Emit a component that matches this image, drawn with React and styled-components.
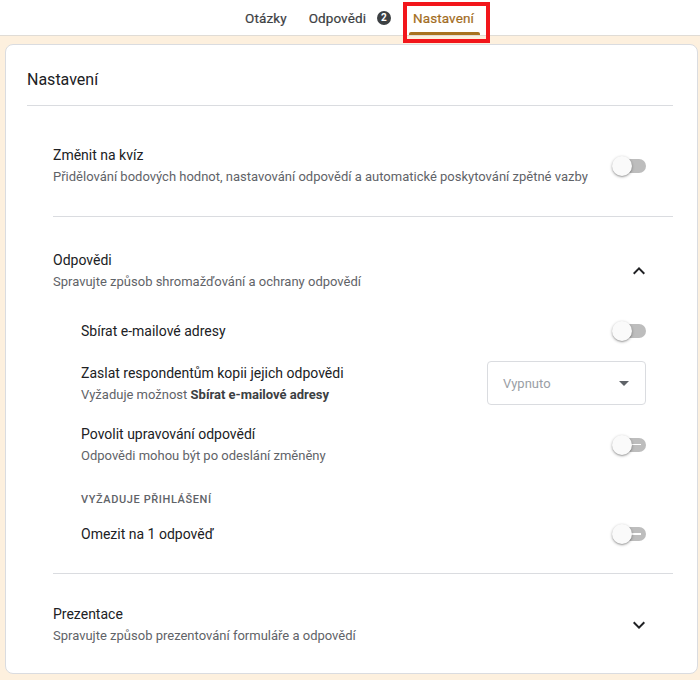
import React from "react";
import styled, { createGlobalStyle, css } from "styled-components";

const Global = createGlobalStyle`
  html, body { margin: 0; padding: 0; }
  body {
    background: #fdf0de;
    font-family: Roboto, "Noto Sans", Arial, sans-serif;
    color: #202124;
    width: 700px;
    height: 680px;
    overflow: hidden;
  }
`;

const TopBar = styled.div`
  height: 35px;
  background: #fff;
  border-bottom: 1px solid #e0dcd6;
  display: flex;
  justify-content: center;
  align-items: stretch;
  gap: 14px;
  padding-left: 19px;
`;

const Tab = styled.div`
  position: relative;
  display: flex;
  align-items: center;
  gap: 11px;
  padding: 0 4px;
  font-size: 13.5px;
  font-weight: 400;
  letter-spacing: 0.1px;
  -webkit-text-stroke: 0.2px currentColor;
  color: ${(p) => (p.$active ? "#a26c1d" : "#3c4043")};
  ${(p) =>
    p.$active &&
    css`
      &::after {
        content: "";
        position: absolute;
        left: 0;
        right: -2px;
        bottom: 0;
        height: 3px;
        background: #a8721f;
        border-radius: 2px 2px 0 0;
      }
    `}
`;

const Badge = styled.span`
  width: 14px;
  height: 14px;
  border-radius: 50%;
  background: #3c4043;
  color: #fff;
  font-size: 10px;
  font-weight: 700;
  -webkit-text-stroke: 0;
  display: inline-flex;
  align-items: center;
  justify-content: center;
`;

const Highlight = styled.div`
  position: absolute;
  top: 2px;
  left: -6px;
  right: -12px;
  bottom: -8px;
  border: 4px solid #f2161b;
  pointer-events: none;
`;

const Card = styled.div`
  margin: 8px 2px 0 5px;
  height: 630px;
  box-sizing: border-box;
  background: #fff;
  border: 1px solid #dadce0;
  border-radius: 8px;
  padding: 0 24px 0 21px;
`;

const CardTitle = styled.div`
  font-size: 16px;
  line-height: 24px;
  padding: 23px 0 13px;
  border-bottom: 1px solid #dadce0;
`;

const Sections = styled.div`
  padding-left: 26px;
`;

const Section = styled.div`
  padding: ${(p) => p.$pad};
  border-bottom: ${(p) => (p.$last ? "none" : "1px solid #dadce0")};
`;

const Row = styled.div`
  display: flex;
  align-items: center;
  justify-content: space-between;
  padding-right: ${(p) => p.$pr || "27px"};
  margin-top: ${(p) => p.$mt || "0"};
`;

const TextBlock = styled.div`
  display: flex;
  flex-direction: column;
  gap: 3px;
`;

const Title = styled.div`
  font-size: 14px;
  line-height: 20px;
  color: #202124;
`;

const Sub = styled.div`
  font-size: 13px;
  line-height: 18px;
  color: #5f6368;
  b { font-weight: 700; color: #3c4043; }
`;

const SubList = styled.div`
  padding-left: 28px;
`;

const Caption = styled.div`
  font-size: 11px;
  line-height: 16px;
  font-weight: 500;
  letter-spacing: 0.6px;
  text-transform: uppercase;
  color: #5f6368;
  margin-top: ${(p) => p.$mt};
`;

const ToggleWrap = styled.div`
  position: relative;
  width: 34px;
  height: 20px;
  flex: none;
`;

const Track = styled.div`
  position: absolute;
  left: 2px;
  right: 0;
  top: 3px;
  height: 14px;
  border-radius: 7px;
  background: #bdbdbd;
  ${(p) =>
    p.$dash &&
    css`
      &::after {
        content: "";
        position: absolute;
        left: 17px;
        width: 10px;
        top: 6px;
        height: 1.5px;
        background: #fff;
      }
    `}
`;

const Thumb = styled.div`
  position: absolute;
  left: 0;
  top: 0;
  width: 20px;
  height: 20px;
  border-radius: 50%;
  background: #fafafa;
  box-shadow: 0 1px 3px rgba(0, 0, 0, 0.35), 0 1px 1px rgba(0, 0, 0, 0.12);
`;

const Toggle = ({ dash }) => (
  <ToggleWrap>
    <Track $dash={dash} />
    <Thumb />
  </ToggleWrap>
);

const Select = styled.div`
  width: 159px;
  height: 44px;
  box-sizing: border-box;
  border: 1px solid #dadce0;
  border-radius: 4px;
  display: flex;
  align-items: center;
  justify-content: space-between;
  padding: 0 16px 0 15px;
  font-size: 13px;
  color: #9aa0a6;
  flex: none;
`;

const Caret = styled.span`
  width: 0;
  height: 0;
  border-left: 5px solid transparent;
  border-right: 5px solid transparent;
  border-top: 5px solid #5f6368;
`;

const Chevron = ({ up }) => (
  <svg width="24" height="24" viewBox="0 0 24 24" fill="#202124">
    {up ? (
      <path d="M7.41 15.41L12 10.83l4.59 4.58L18 14l-6-6-6 6z" />
    ) : (
      <path d="M7.41 8.59L12 13.17l4.59-4.58L18 10l-6 6-6-6 1.41-1.41z" />
    )}
  </svg>
);

export default function App() {
  return (
    <>
      <Global />
      <TopBar>
        <Tab>Otázky</Tab>
        <Tab>
          Odpovědi <Badge>2</Badge>
        </Tab>
        <Tab $active>
          Nastavení
          <Highlight />
        </Tab>
      </TopBar>
      <Card>
        <CardTitle>Nastavení</CardTitle>
        <Sections>
          <Section $pad="39px 0 30px">
            <Row>
              <TextBlock>
                <Title>Změnit na kvíz</Title>
                <Sub>
                  Přidělování bodových hodnot, nastavování odpovědí a automatické
                  poskytování zpětné vazby
                </Sub>
              </TextBlock>
              <Toggle />
            </Row>
          </Section>
          <Section $pad="33px 0 29px">
            <Row $pr="22px">
              <TextBlock>
                <Title>Odpovědi</Title>
                <Sub>Spravujte způsob shromažďování a ochrany odpovědí</Sub>
              </TextBlock>
              <Chevron up />
            </Row>
            <SubList>
              <Row $mt="30px">
                <Title>Sbírat e-mailové adresy</Title>
                <Toggle />
              </Row>
              <Row $mt="20px" $pr="27px">
                <TextBlock>
                  <Title>Zaslat respondentům kopii jejich odpovědi</Title>
                  <Sub>
                    Vyžaduje možnost <b>Sbírat e-mailové adresy</b>
                  </Sub>
                </TextBlock>
                <Select>
                  Vypnuto
                  <Caret />
                </Select>
              </Row>
              <Row $mt="19px">
                <TextBlock>
                  <Title>Povolit upravování odpovědí</Title>
                  <Sub>Odpovědi mohou být po odeslání změněny</Sub>
                </TextBlock>
                <Toggle dash />
              </Row>
              <Caption $mt="27px">Vyžaduje přihlášení</Caption>
              <Row $mt="16px">
                <Title>Omezit na 1 odpověď</Title>
                <Toggle dash />
              </Row>
            </SubList>
          </Section>
          <Section $pad="30px 0 28px" $last>
            <Row $pr="22px">
              <TextBlock>
                <Title>Prezentace</Title>
                <Sub>Spravujte způsob prezentování formuláře a odpovědí</Sub>
              </TextBlock>
              <Chevron />
            </Row>
          </Section>
        </Sections>
      </Card>
    </>
  );
}
